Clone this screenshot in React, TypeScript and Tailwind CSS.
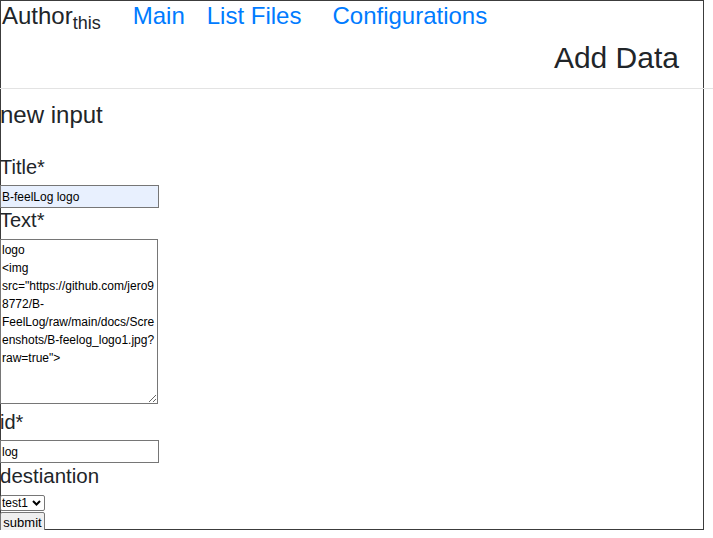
import React from 'react';

const textValue =
  'logo\n<img src="https://github.com/jero98772/B-FeelLog/raw/main/docs/Screenshots/B-feelog_logo1.jpg?raw=true">';

const navLinks = [
  { label: 'Main', gap: 'ml-[32px]' },
  { label: 'List Files', gap: 'ml-[22px]' },
  { label: 'Configurations', gap: 'ml-[31px]' },
];

const App: React.FC = () => {
  return (
    <div className="w-[704px] h-[530px] border border-[#3c3c3c] bg-white text-[#212529] font-['Liberation_Sans',Arial,sans-serif]">
      {/* Header */}
      <header className="h-[87px] flex flex-col">
        <nav className="flex items-baseline pl-[1px] leading-[30px] text-[24px]">
          <span>
            Author<sub className="text-[18px]">this</sub>
          </span>
          {navLinks.map((link) => (
            <a key={link.label} href="#" className={`${link.gap} text-[#007bff]`}>
              {link.label}
            </a>
          ))}
        </nav>
        <div className="flex justify-end pr-[24px] mt-[9px]">
          <h1 className="text-[30px] leading-[36px]">Add Data</h1>
        </div>
      </header>

      <hr className="w-[713px] -ml-px border-0 border-t border-[#e3e3e3]" />

      {/* Form */}
      <form className="-ml-px flex flex-col items-start" onSubmit={(e) => e.preventDefault()}>
        <h3 className="mt-[8px] text-[24px] leading-[36px]">new input</h3>

        <label className="mt-[22px] text-[20px] leading-[24px]">Title*</label>
        <input
          defaultValue="B-feelLog logo"
          className="mt-[6px] w-[159px] h-[23px] px-[1px] border border-[#767676] bg-[#e8f0fe] text-[12px] text-black outline-none"
        />

        <label className="text-[20px] leading-[24px]">Text*</label>
        <textarea
          defaultValue={textValue}
          spellCheck={false}
          className="mt-[7px] w-[158px] h-[165px] p-[1px] border border-[#767676] text-[12px] leading-[18px] text-black outline-none resize"
        />

        <label className="mt-[6px] text-[20px] leading-[24px]">id*</label>
        <input
          defaultValue="log"
          className="mt-[6px] w-[159px] h-[23px] px-[1px] border border-[#767676] text-[12px] text-black outline-none"
        />

        <label className="mt-[1px] text-[20.5px] leading-[24px]">destiantion</label>
        <div className="relative mt-[7px] flex">
          <select
            defaultValue="test1"
            className="appearance-none w-[45px] h-[16px] pl-[1px] border border-[#767676] rounded-[2px] bg-white text-[12px] leading-[14px] text-black outline-none"
          >
            <option value="test1">test1</option>
            <option value="test2">test2</option>
          </select>
          <svg
            className="absolute right-[4px] top-[5px] pointer-events-none"
            width="9"
            height="6"
            viewBox="0 0 9 6"
          >
            <path d="M1 1 L4.5 4.5 L8 1" fill="none" stroke="#000" strokeWidth="2" />
          </svg>
        </div>
        <button
          type="submit"
          className="mt-px w-[45px] h-[22px] border border-[#767676] rounded-[2px] bg-[#efefef] text-[13px] text-black"
        >
          submit
        </button>
      </form>
    </div>
  );
};

export default App;
